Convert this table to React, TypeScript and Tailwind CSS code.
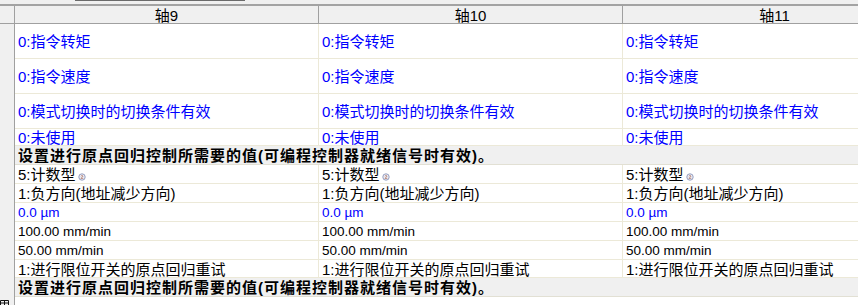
import clsx from 'clsx'

const columns = ['轴9', '轴10', '轴11']

interface RowDef {
  text: string
  height: string
  tone: 'blue' | 'black'
  size?: 'latin'
  mark?: boolean
}

const topRows: RowDef[] = [
  { text: '0:指令转矩', height: 'h-[35px]', tone: 'blue' },
  { text: '0:指令速度', height: 'h-[35px]', tone: 'blue' },
  { text: '0:模式切换时的切换条件有效', height: 'h-[35px]', tone: 'blue' },
  { text: '0:未使用', height: 'h-[17px]', tone: 'blue' },
]

const homeRows: RowDef[] = [
  { text: '5:计数型', height: 'h-[19px]', tone: 'black', mark: true },
  { text: '1:负方向(地址减少方向)', height: 'h-[19px]', tone: 'black' },
  { text: '0.0 µm', height: 'h-[19px]', tone: 'blue', size: 'latin' },
  { text: '100.00 mm/min', height: 'h-[19px]', tone: 'black', size: 'latin' },
  { text: '50.00 mm/min', height: 'h-[19px]', tone: 'black', size: 'latin' },
  { text: '1:进行限位开关的原点回归重试', height: 'h-[18px]', tone: 'black' },
]

const sectionText = '设置进行原点回归控制所需要的值(可编程控制器就绪信号时有效)。'

function Gutter({ className }: { className?: string }) {
  return <div className={clsx('w-[15px] shrink-0 bg-[#f0f0f0] border-r border-[#a0a0a0]', className)} />
}

function Mark() {
  return (
    <svg width="8" height="8" viewBox="0 0 8 8" className="ml-[2px] mt-[5px]">
      <circle cx="4" cy="4" r="3.2" fill="#eef0f8" stroke="#8a93b8" strokeWidth="0.9" />
      <path d="M2.8 3.2 Q4 1.8 5 3 Q5 4 2.8 5.4 H5.3" fill="none" stroke="#b07a6a" strokeWidth="0.8" />
    </svg>
  )
}

function DataRow({ row }: { row: RowDef }) {
  const widths = ['w-[304px]', 'w-[304px]', 'w-[304px]']
  return (
    <div className={clsx('flex shrink-0', row.height)}>
      <Gutter />
      {widths.map((w, i) => (
        <div
          key={i}
          className={clsx(
            'shrink-0 flex items-center pl-[3px] pt-px bg-white border-r border-b border-[#ece9d8] whitespace-nowrap overflow-hidden',
            w,
            row.tone === 'blue' ? 'text-[#0000ff]' : 'text-black',
            row.size === 'latin' ? 'text-[13.5px]' : 'text-[15px]'
          )}
        >
          <span>{row.text}</span>
          {row.mark && <Mark />}
        </div>
      ))}
    </div>
  )
}

function SectionRow() {
  return (
    <div className="flex h-[19px] shrink-0">
      <Gutter />
      <div className="w-[912px] shrink-0 flex items-center pl-[3px] pt-px bg-[#f0f0f0] border-b border-[#e2e0d4] whitespace-nowrap text-[15px] font-bold tracking-[1px] text-black">
        {sectionText}
      </div>
    </div>
  )
}

export default function App() {
  return (
    <div className="w-[858px] h-[305px] overflow-hidden bg-white flex flex-col font-['Liberation_Sans','Noto_Sans_CJK_SC',sans-serif] leading-none">
      {/* strip above the grid */}
      <div className="h-[4px] shrink-0 bg-[#f0f0f0] pl-[75px]">
        <div className="w-[170px] h-px bg-[#6b6b6b]" />
      </div>

      {/* column header */}
      <div className="flex h-[20px] shrink-0 border-t-2 border-[#a3a3a3] bg-[#f0f0f0]">
        <div className="w-[15px] shrink-0 border-r border-b border-[#a0a0a0]" />
        {columns.map((c) => (
          <div
            key={c}
            className="w-[304px] shrink-0 flex items-center justify-center pt-px border-r border-b border-[#a0a0a0] text-[15px] text-black"
          >
            {c}
          </div>
        ))}
      </div>

      {topRows.map((r) => (
        <DataRow key={r.text} row={r} />
      ))}
      <SectionRow />
      {homeRows.map((r) => (
        <DataRow key={r.text} row={r} />
      ))}
      <SectionRow />

      <div className="flex flex-1">
        <div className="w-[15px] shrink-0 bg-[#f0f0f0] border-r border-[#a0a0a0] flex items-end">
          <svg width="9" height="6" viewBox="0 0 9 6">
            <path d="M0.5 6 V1.5 H8.5 V6 M4.5 1.5 V6 M0.5 4 H8.5" fill="none" stroke="#111" strokeWidth="1" />
          </svg>
        </div>
        <div className="flex-1 bg-white" />
      </div>
    </div>
  )
}
